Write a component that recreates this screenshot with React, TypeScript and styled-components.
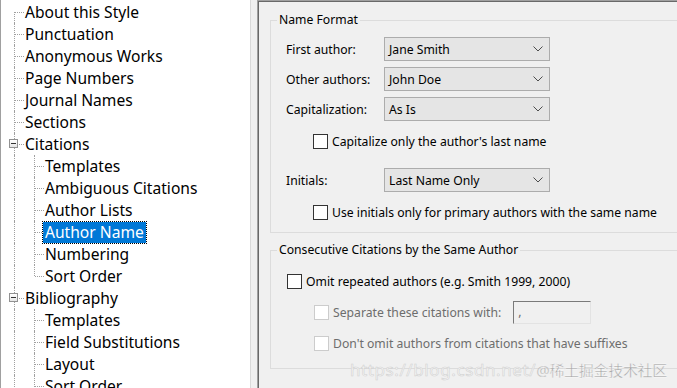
import styled, { createGlobalStyle } from "styled-components";

const GlobalStyle = createGlobalStyle`
  html, body {
    margin: 0;
    padding: 0;
    background: #f0f0f0;
  }
  body {
    font-family: "Noto Sans", "Liberation Sans", sans-serif;
  }
`;

type Node = {
  label: string;
  selected?: boolean;
  children?: Node[];
};

const tree: Node[] = [
  { label: "About this Style" },
  { label: "Punctuation" },
  { label: "Anonymous Works" },
  { label: "Page Numbers" },
  { label: "Journal Names" },
  { label: "Sections" },
  {
    label: "Citations",
    children: [
      { label: "Templates" },
      { label: "Ambiguous Citations" },
      { label: "Author Lists" },
      { label: "Author Name", selected: true },
      { label: "Numbering" },
      { label: "Sort Order" },
    ],
  },
  {
    label: "Bibliography",
    children: [
      { label: "Templates" },
      { label: "Field Substitutions" },
      { label: "Layout" },
      { label: "Sort Order" },
      { label: "Categories" },
    ],
  },
];

const Window = styled.div`
  display: flex;
  width: 677px;
  height: 388px;
  overflow: hidden;
  background: #f0f0f0;
`;

const TreePane = styled.div`
  width: 251px;
  flex: none;
  box-sizing: border-box;
  background: #ffffff;
  border-left: 1px solid #a0a0a0;
  border-right: 1px solid #dadada;
  padding-top: 1px;
  font-size: 15.6px;
  color: #000;
`;

const TreeRow = styled.div`
  display: flex;
  align-items: center;
  height: 22px;
  padding-left: 3px;
`;

type Line = "full" | "top" | "bottom" | "none";

const Guide = styled.span<{ $v: Line; $h?: boolean }>`
  position: relative;
  width: 20px;
  height: 22px;
  flex: none;
  &::before {
    content: "";
    display: ${(p) => (p.$v === "none" ? "none" : "block")};
    position: absolute;
    left: 10px;
    top: ${(p) => (p.$v === "bottom" ? "11px" : "0")};
    bottom: ${(p) => (p.$v === "top" ? "11px" : "0")};
    border-left: 1px dotted #a0a0a0;
  }
  &::after {
    content: "";
    display: ${(p) => (p.$h ? "block" : "none")};
    position: absolute;
    left: 11px;
    top: 11px;
    width: 9px;
    border-top: 1px dotted #a0a0a0;
  }
`;

const Expander = styled.span`
  position: absolute;
  z-index: 1;
  left: 5px;
  top: 6px;
  width: 9px;
  height: 9px;
  box-sizing: border-box;
  border: 1px solid #919191;
  background: linear-gradient(#ffffff, #e6e6e6);
  &::after {
    content: "";
    position: absolute;
    left: 1px;
    top: 3px;
    width: 5px;
    border-top: 1px solid #333;
  }
`;

const Label = styled.span<{ $selected?: boolean }>`
  margin-left: -1px;
  padding: 0 2px;
  line-height: 21px;
  white-space: nowrap;
  background: ${(p) => (p.$selected ? "#0078d7" : "transparent")};
  color: ${(p) => (p.$selected ? "#ffffff" : "#000")};
  outline: ${(p) => (p.$selected ? "1px dotted #000" : "none")};
`;

const RightPanel = styled.div`
  flex: 1;
  margin-left: 6px;
  border-left: 1px solid #a0a0a0;
  border-top: 1px solid #a0a0a0;
  box-shadow: inset 1px 1px 0 #696969;
  padding: 11px 0 0 12px;
  font-size: 12.2px;
  color: #000;
  position: relative;
`;

const Group = styled.fieldset<{ $top?: number; $bottom?: number }>`
  margin: 0 -30px 9px 0;
  padding: ${(p) => p.$top ?? 9}px 0 ${(p) => p.$bottom ?? 9}px 15px;
  border: 1px solid #dcdcdc;
  min-width: 0;
`;

const Legend = styled.legend`
  padding: 0 2px;
  margin-left: -9px;
  line-height: 16px;
`;

const FieldRow = styled.div<{ $gap?: number }>`
  display: flex;
  align-items: center;
  height: 24px;
  margin-bottom: ${(p) => p.$gap ?? 6}px;
`;

const FieldLabel = styled.span`
  width: 98px;
  flex: none;
`;

const Dropdown = styled.div`
  width: 166px;
  height: 24px;
  box-sizing: border-box;
  border: 1px solid #acacac;
  background: #e5e5e5;
  display: flex;
  align-items: center;
  justify-content: space-between;
  padding: 0 6px 0 4px;
`;

const CheckRow = styled.div<{ $indent: number; $disabled?: boolean; $gap?: number }>`
  display: flex;
  align-items: center;
  gap: 4px;
  height: 22px;
  padding-left: ${(p) => p.$indent}px;
  margin-bottom: ${(p) => p.$gap ?? 0}px;
  color: ${(p) => (p.$disabled ? "#6d6d6d" : "#000")};
`;

const Box = styled.span<{ $disabled?: boolean }>`
  width: 15px;
  height: 15px;
  box-sizing: border-box;
  flex: none;
  background: #ffffff;
  border: 1px solid ${(p) => (p.$disabled ? "#cccccc" : "#333333")};
`;

const SepInput = styled.div`
  margin-left: 8px;
  width: 78px;
  height: 23px;
  box-sizing: border-box;
  border: 1px solid #e3e3e3;
  border-top-color: #7a7a7a;
  border-left-color: #7a7a7a;
  background: #f0f0f0;
  padding: 0 4px;
  line-height: 20px;
  color: #6d6d6d;
`;

const Watermark = styled.div`
  position: absolute;
  right: 10px;
  bottom: 7px;
  white-space: nowrap;
  font-family: "Noto Sans", "Noto Sans CJK SC", sans-serif;
`;

const WmUrl = styled.span`
  font-size: 17px;
  letter-spacing: 0.6px;
  color: #f7f7f7;
  -webkit-text-stroke: 0.6px #d2d2d2;
`;

const WmName = styled.span`
  font-size: 15px;
  letter-spacing: -0.3px;
  color: #a6a6a6;
  -webkit-text-stroke: 0.3px #ffffff;
`;

const Chevron = () => (
  <svg width="10" height="6" viewBox="0 0 10 6">
    <path d="M0.5 0.5 L5 5 L9.5 0.5" fill="none" stroke="#4d4d4d" strokeWidth="1" />
  </svg>
);

const Select = ({ value }: { value: string }) => (
  <Dropdown>
    <span>{value}</span>
    <Chevron />
  </Dropdown>
);

const rows: { node: Node; level: number; first: boolean; last: boolean }[] = [];
tree.forEach((n, i) => {
  rows.push({ node: n, level: 0, first: i === 0, last: false });
  n.children?.forEach((c, j) => {
    rows.push({
      node: c,
      level: 1,
      first: false,
      last: j === (n.children?.length ?? 0) - 1 && n.label === "Citations",
    });
  });
});

export default function App() {
  return (
    <>
      <GlobalStyle />
      <Window>
        <TreePane>
          {rows.map((r, i) => (
            <TreeRow key={i}>
              {r.level === 0 ? (
                <Guide $v={r.first ? "bottom" : "full"} $h>
                  {r.node.children && <Expander />}
                </Guide>
              ) : (
                <>
                  <Guide $v="full" />
                  <Guide $v={r.last ? "top" : "full"} $h />
                </>
              )}
              <Label $selected={r.node.selected}>{r.node.label}</Label>
            </TreeRow>
          ))}
        </TreePane>
        <RightPanel>
          <Group>
            <Legend>Name Format</Legend>
            <FieldRow>
              <FieldLabel>First author:</FieldLabel>
              <Select value="Jane Smith" />
            </FieldRow>
            <FieldRow>
              <FieldLabel>Other authors:</FieldLabel>
              <Select value="John Doe" />
            </FieldRow>
            <FieldRow $gap={9}>
              <FieldLabel>Capitalization:</FieldLabel>
              <Select value="As Is" />
            </FieldRow>
            <CheckRow $indent={27} $gap={16}>
              <Box />
              <span>Capitalize only the author's last name</span>
            </CheckRow>
            <FieldRow $gap={9}>
              <FieldLabel>Initials:</FieldLabel>
              <Select value="Last Name Only" />
            </FieldRow>
            <CheckRow $indent={27}>
              <Box />
              <span>Use initials only for primary authors with the same name</span>
            </CheckRow>
          </Group>
          <Group $top={12} $bottom={14}>
            <Legend>Consecutive Citations by the Same Author</Legend>
            <CheckRow $indent={1} $gap={9}>
              <Box />
              <span>Omit repeated authors (e.g. Smith 1999, 2000)</span>
            </CheckRow>
            <CheckRow $indent={28} $gap={9} $disabled>
              <Box $disabled />
              <span>Separate these citations with:</span>
              <SepInput>,</SepInput>
            </CheckRow>
            <CheckRow $indent={28} $disabled>
              <Box $disabled />
              <span>Don't omit authors from citations that have suffixes</span>
            </CheckRow>
          </Group>
          <Watermark>
            <WmUrl>https://blog.csdn.net/</WmUrl>
            <WmName>@稀土掘金技术社区</WmName>
          </Watermark>
        </RightPanel>
      </Window>
    </>
  );
}
